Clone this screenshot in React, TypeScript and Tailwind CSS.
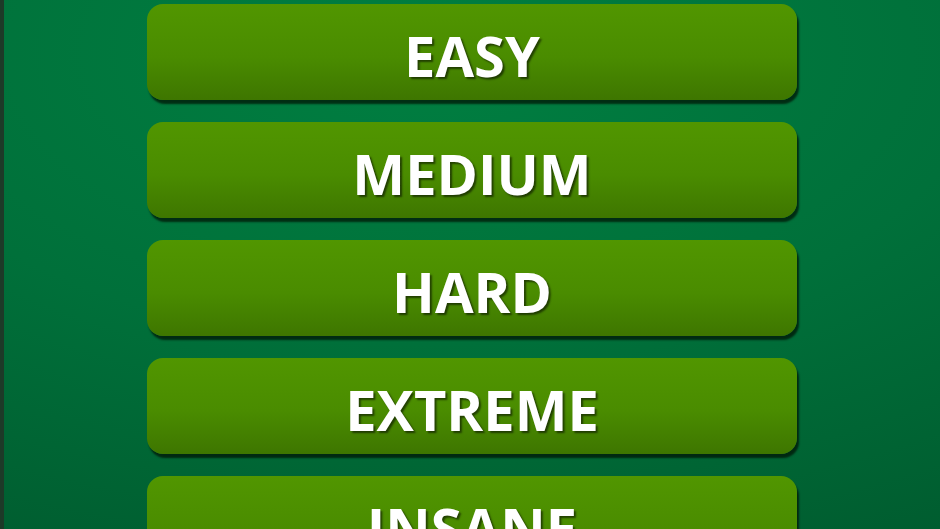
import React from 'react';

const levels = ['EASY', 'MEDIUM', 'HARD', 'EXTREME', 'INSANE'];

const App: React.FC = () => {
  return (
    <div className="flex h-[529px] w-full overflow-hidden bg-[radial-gradient(ellipse_120%_110%_at_45%_10%,#007f41_0%,#00703a_50%,#005a2e_100%)]">
      <div className="w-[4px] shrink-0 bg-[#1d3a28]" />
      <div className="ml-[143px] flex w-[650px] shrink-0 flex-col gap-[22px] pt-[4px]">
        {levels.map((level) => (
          <button
            type="button"
            key={level}
            className="flex h-[96px] shrink-0 items-center justify-center rounded-[16px] bg-[linear-gradient(to_bottom,#519600_0%,#4a8c00_55%,#3e7600_100%)] pt-[6px] shadow-[2px_4px_2px_rgba(0,20,5,0.75)]"
          >
            <span className="font-['Open_Sans',sans-serif] text-[56px] leading-none font-bold text-white [text-shadow:2px_2px_2px_rgba(0,0,0,0.55)]">
              {level}
            </span>
          </button>
        ))}
      </div>
    </div>
  );
};

export default App;
